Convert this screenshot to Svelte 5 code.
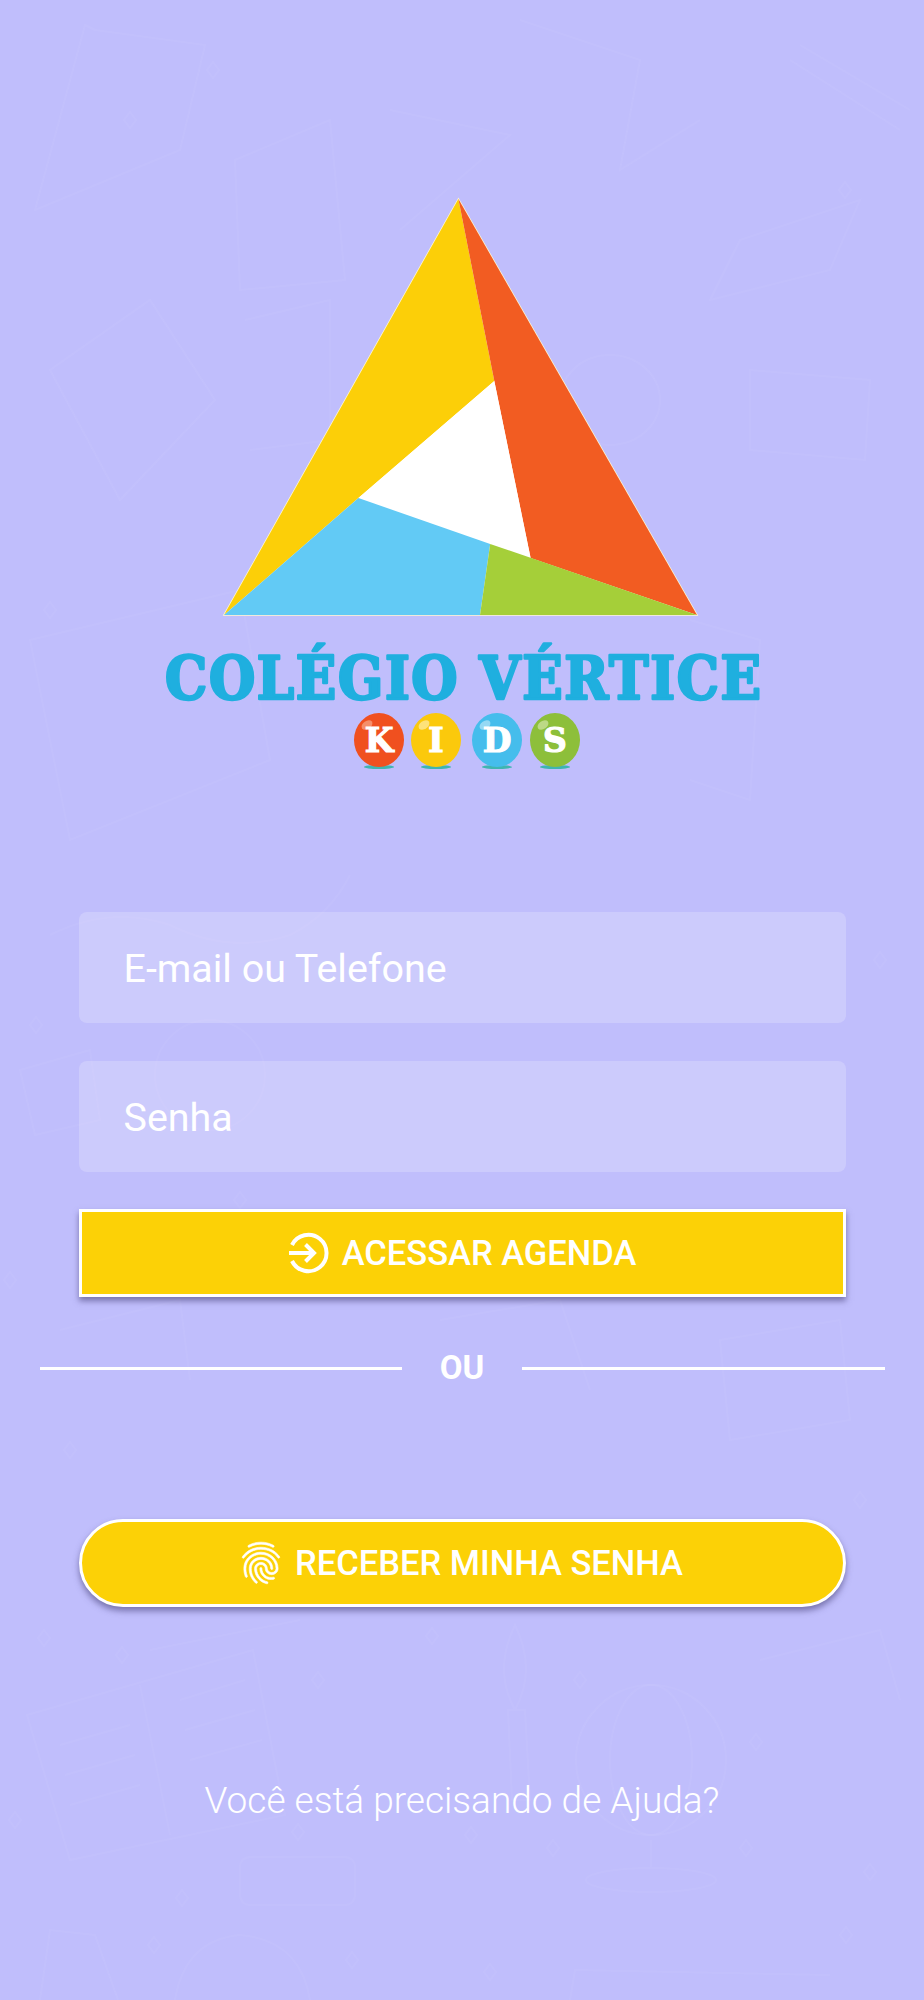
<script lang="ts">
  const balloons = [
    { letter: 'K', cx: 379, color: '#f0501f', shine: '#f58f6a' },
    { letter: 'I', cx: 436, color: '#fbc90c', shine: '#fde27a' },
    { letter: 'D', cx: 497, color: '#45bdec', shine: '#95d9f4' },
    { letter: 'S', cx: 555, color: '#8dbf3a', shine: '#bcd986' }
  ];

  // faint school doodles behind the form
  const doodles = [
    // book
    'M27 1715 L253 1650 L285 1815 L70 1860 Z',
    'M140 1685 L170 1835',
    'M60 1745 L130 1725 M65 1775 L135 1755 M70 1805 L140 1785',
    'M180 1700 L245 1680 M185 1730 L255 1710 M190 1760 L262 1740',
    // paint brush
    'M515 1625 q-22 45 0 85 q22 -40 0 -85 Z M508 1710 L525 1710 L530 1800 L512 1800 Z',
    // globe
    'M576 1760 a75 75 0 1 0 150 0 a75 75 0 1 0 -150 0',
    'M610 1760 a41 75 0 1 0 82 0 a41 75 0 1 0 -82 0',
    'M651 1840 L651 1868 M586 1880 a65 12 0 1 0 130 0 a65 12 0 1 0 -130 0',
    // tablet and lower shapes
    'M240 1868 q0 -11 11 -11 h93 q11 0 11 11 v26 q0 11 -11 11 h-93 q-11 0 -11 -11 z',
    'M40 2000 L50 1930 L95 1935 L118 2000',
    'M175 2000 q10 -60 65 -65 q60 5 70 65',
    'M570 2000 L575 1970 L830 1975',
    // top area
    'M95 30 L205 45 L180 150 L35 210 L85 25 Z',
    'M235 160 L330 120 L345 280 L240 290 Z',
    'M390 110 L510 135 L400 230',
    'M520 20 L640 60 L620 170 L700 120',
    'M800 45 L910 110 M790 60 L900 130',
    'M740 240 L860 200 L830 270 L710 300 Z',
    'M50 370 L150 300 L215 400 L120 500 Z',
    'M245 320 L330 300 L330 440 L250 450',
    'M750 370 L870 380 L865 460 L750 450 Z',
    'M30 640 L240 590 L270 760 L70 840 Z',
    'M690 620 L760 640 L750 800 L690 780',
    'M560 400 a50 45 0 1 0 100 0 a50 45 0 1 0 -100 0',
    // around the form
    'M50 935 q60 -30 120 -10 q60 30 120 10 q40 -20 60 -60',
    'M20 1070 L90 1050 L100 1120 L35 1135 Z',
    'M155 1075 a55 55 0 1 0 110 0 a55 55 0 1 0 -110 0',
    'M60 1330 L180 1300 L190 1380',
    'M440 1320 L560 1300 L590 1390',
    'M720 1340 L840 1320 L850 1420 L730 1440 Z',
    'M150 1650 L300 1620',
    'M760 1660 L880 1630 L900 1700'
  ];

  // small diamonds sprinkled on the pattern
  const sparks = [
    [44, 1638], [122, 1655], [318, 1680], [432, 1636], [580, 1680], [756, 1742], [298, 1832],
    [471, 1835], [553, 1848], [746, 1848], [870, 1872], [182, 1898], [352, 1960], [154, 1945],
    [490, 1972], [846, 1935], [15, 1820], [36, 1025], [130, 120], [213, 70], [340, 530], [845, 190],
    [50, 610], [240, 1200], [10, 1280], [880, 960], [70, 1450], [860, 1500]
  ];
</script>

<div class="page">
  <svg class="pattern" viewBox="0 0 924 2000" aria-hidden="true">
    {#each doodles as d}
      <path {d} />
    {/each}
    {#each sparks as [x, y]}
      <path d="M{x} {y - 8} L{x + 6} {y} L{x} {y + 8} L{x - 6} {y} Z" />
    {/each}
  </svg>

  <main class="content">
    <svg class="logo" viewBox="142 180 640 600" role="img" aria-label="Colégio Vértice Kids">
      <polygon points="458.4,199 224,615 697,615" fill="#fff" stroke="#fff7d0" stroke-width="1.5" />
      <polygon points="458.4,199 494.3,381 358.4,498 224,615" fill="#fccf08" />
      <polygon points="458.4,199 697,615 530.6,558 494.3,381" fill="#f25c22" />
      <polygon points="494.3,381 530.6,558 358.4,498" fill="#fff" />
      <polygon points="358.4,498 490.2,544 480,615 224,615" fill="#62caf5" />
      <polygon points="490.2,544 697,615 480,615" fill="#a5cf39" />

      <text class="school" x="165" y="699">COLÉGIO VÉRTICE</text>

      {#each balloons as b}
        <ellipse cx={b.cx} cy="767" rx="15" ry="2" fill="#3fb5b0" />
        <ellipse cx={b.cx} cy="740" rx="25" ry="27" fill={b.color} />
        <ellipse cx={b.cx - 12} cy="725" rx="6" ry="4" fill={b.shine} transform="rotate(-35 {b.cx - 12} 725)" />
        <text class="balloon" x={b.cx} y="752">{b.letter}</text>
      {/each}
    </svg>

    <div class="fields">
      <div class="field">E-mail ou Telefone</div>
      <div class="field">Senha</div>
    </div>

    <button class="btn square">
      <svg class="enter" viewBox="0 0 42 42" aria-hidden="true">
        <path d="M4 13 A18.2 18.2 0 1 1 4 29" />
        <path d="M1 21 H25 M17.5 12.5 L26 21 L17.5 29.5" />
      </svg>
      ACESSAR AGENDA
    </button>

    <div class="divider">
      <span class="line"></span>
      <span class="or">OU</span>
      <span class="line"></span>
    </div>

    <button class="btn round">
      <svg class="finger" viewBox="0 0 24 24" aria-hidden="true">
        <path d="M17.81 4.47c-.08 0-.16-.02-.23-.06C15.66 3.42 14 3 12.01 3c-1.98 0-3.86.47-5.57 1.41-.24.13-.54.04-.68-.2-.13-.24-.04-.55.2-.68C7.82 2.52 9.86 2 12.01 2c2.13 0 3.99.47 6.03 1.52.25.13.34.43.21.67-.09.18-.26.28-.44.28zM3.5 9.72c-.1 0-.2-.03-.29-.09-.23-.16-.28-.47-.12-.7.99-1.4 2.25-2.5 3.75-3.27C9.98 4.04 14 4.03 17.15 5.65c1.5.77 2.76 1.86 3.75 3.25.16.22.11.54-.12.7-.23.16-.54.11-.7-.12-.9-1.26-2.04-2.25-3.39-2.94-2.87-1.47-6.54-1.47-9.4.01-1.36.7-2.5 1.7-3.4 2.96-.08.14-.23.21-.39.21zm6.25 12.07c-.13 0-.26-.05-.35-.15-.87-.87-1.34-1.43-2.01-2.64-.69-1.23-1.05-2.73-1.05-4.34 0-2.97 2.54-5.39 5.66-5.39s5.66 2.42 5.66 5.39c0 .28-.22.5-.5.5s-.5-.22-.5-.5c0-2.42-2.09-4.39-4.66-4.39-2.57 0-4.66 1.97-4.66 4.39 0 1.44.32 2.77.93 3.85.64 1.15 1.08 1.64 1.85 2.42.19.2.19.51 0 .71-.11.1-.24.15-.37.15zm7.17-1.85c-1.19 0-2.24-.3-3.1-.89-1.49-1.01-2.38-2.65-2.38-4.39 0-.28.22-.5.5-.5s.5.22.5.5c0 1.41.72 2.74 1.94 3.56.71.48 1.54.71 2.54.71.24 0 .64-.03 1.04-.1.27-.05.53.13.58.41.05.27-.13.53-.41.58-.57.11-1.07.12-1.21.12zM14.91 22c-.04 0-.09-.01-.13-.02-1.59-.44-2.63-1.03-3.72-2.1-1.4-1.39-2.17-3.24-2.17-5.22 0-1.62 1.38-2.94 3.08-2.94 1.7 0 3.08 1.32 3.08 2.94 0 1.07.93 1.94 2.08 1.94s2.08-.87 2.08-1.94c0-3.77-3.25-6.83-7.25-6.83-2.84 0-5.44 1.58-6.61 4.03-.39.81-.59 1.76-.59 2.8 0 .78.07 2.01.67 3.61.1.26-.03.55-.29.64-.26.1-.55-.04-.64-.29-.49-1.31-.73-2.61-.73-3.96 0-1.2.23-2.29.68-3.24 1.33-2.79 4.28-4.6 7.51-4.6 4.55 0 8.25 3.51 8.25 7.83 0 1.62-1.38 2.94-3.08 2.94s-3.08-1.32-3.08-2.94c0-1.07-.93-1.94-2.08-1.94s-2.08.87-2.08 1.94c0 1.71.66 3.31 1.87 4.51.95.94 1.86 1.46 3.27 1.85.27.07.42.35.35.61-.05.23-.26.38-.47.38z" />
      </svg>
      RECEBER MINHA SENHA
    </button>

    <p class="help">Você está precisando de Ajuda?</p>
  </main>
</div>

<style>
  :global(body) {
    margin: 0;
    background: #c0befc;
  }

  .page {
    position: relative;
    width: 924px;
    height: 2000px;
    overflow: hidden;
    background: #c0befc;
    font-family: Roboto, sans-serif;
    color: #fff;
  }

  .pattern {
    position: absolute;
    inset: 0;
    width: 924px;
    height: 2000px;
    fill: none;
    stroke: rgba(255, 255, 255, 0.045);
    stroke-width: 2;
  }

  .content {
    position: relative;
    display: flex;
    flex-direction: column;
    align-items: center;
    padding-top: 180px;
  }

  .logo {
    display: block;
    width: 640px;
    height: 600px;
  }

  .school {
    font-family: "DejaVu Serif Condensed", "DejaVu Serif", serif;
    font-weight: 700;
    font-size: 59px;
    letter-spacing: 1.65px;
    fill: #1fafdf;
    stroke: #1fafdf;
    stroke-width: 2.5;
    stroke-linejoin: round;
  }

  .balloon {
    font-family: "DejaVu Serif", serif;
    font-weight: 700;
    font-size: 33px;
    fill: #fff;
    stroke: #fff;
    stroke-width: 1.2;
    text-anchor: middle;
  }

  .fields {
    display: flex;
    flex-direction: column;
    gap: 38px;
    margin-top: 132px;
  }

  .field {
    box-sizing: border-box;
    width: 767px;
    height: 111px;
    padding: 2px 45px 0;
    display: flex;
    align-items: center;
    border-radius: 8px;
    background: rgba(255, 255, 255, 0.2);
    font-size: 39.4px;
  }

  .btn {
    box-sizing: border-box;
    width: 767px;
    height: 88px;
    display: flex;
    align-items: center;
    justify-content: center;
    border: 3px solid #fff;
    background: #fcd106;
    color: #fff;
    font-family: Roboto, sans-serif;
    font-weight: 500;
    font-size: 34.5px;
    box-shadow: 0 4px 6px rgba(60, 55, 110, 0.55);
    padding: 0;
  }

  .square {
    margin-top: 37px;
    gap: 12px;
  }

  .round {
    border-radius: 44px;
    gap: 9px;
    padding-right: 5px;
  }

  .enter {
    width: 42px;
    height: 42px;
    fill: none;
    stroke: #fff;
    stroke-width: 4;
  }

  .finger {
    width: 50px;
    height: 50px;
    fill: #fff;
    stroke: #fff;
    stroke-width: 0.3;
  }

  .divider {
    width: 845px;
    height: 222px;
    display: flex;
    align-items: flex-start;
    gap: 38px;
    padding-top: 49px;
    box-sizing: border-box;
  }

  .line {
    flex: 1;
    height: 2.5px;
    margin-top: 21px;
    background: #fff;
  }

  .or {
    font-size: 33px;
    font-weight: 700;
    line-height: 44px;
  }

  .help {
    margin: 170px 0 0;
    font-size: 37px;
    font-weight: 300;
    line-height: 48px;
  }
</style>
